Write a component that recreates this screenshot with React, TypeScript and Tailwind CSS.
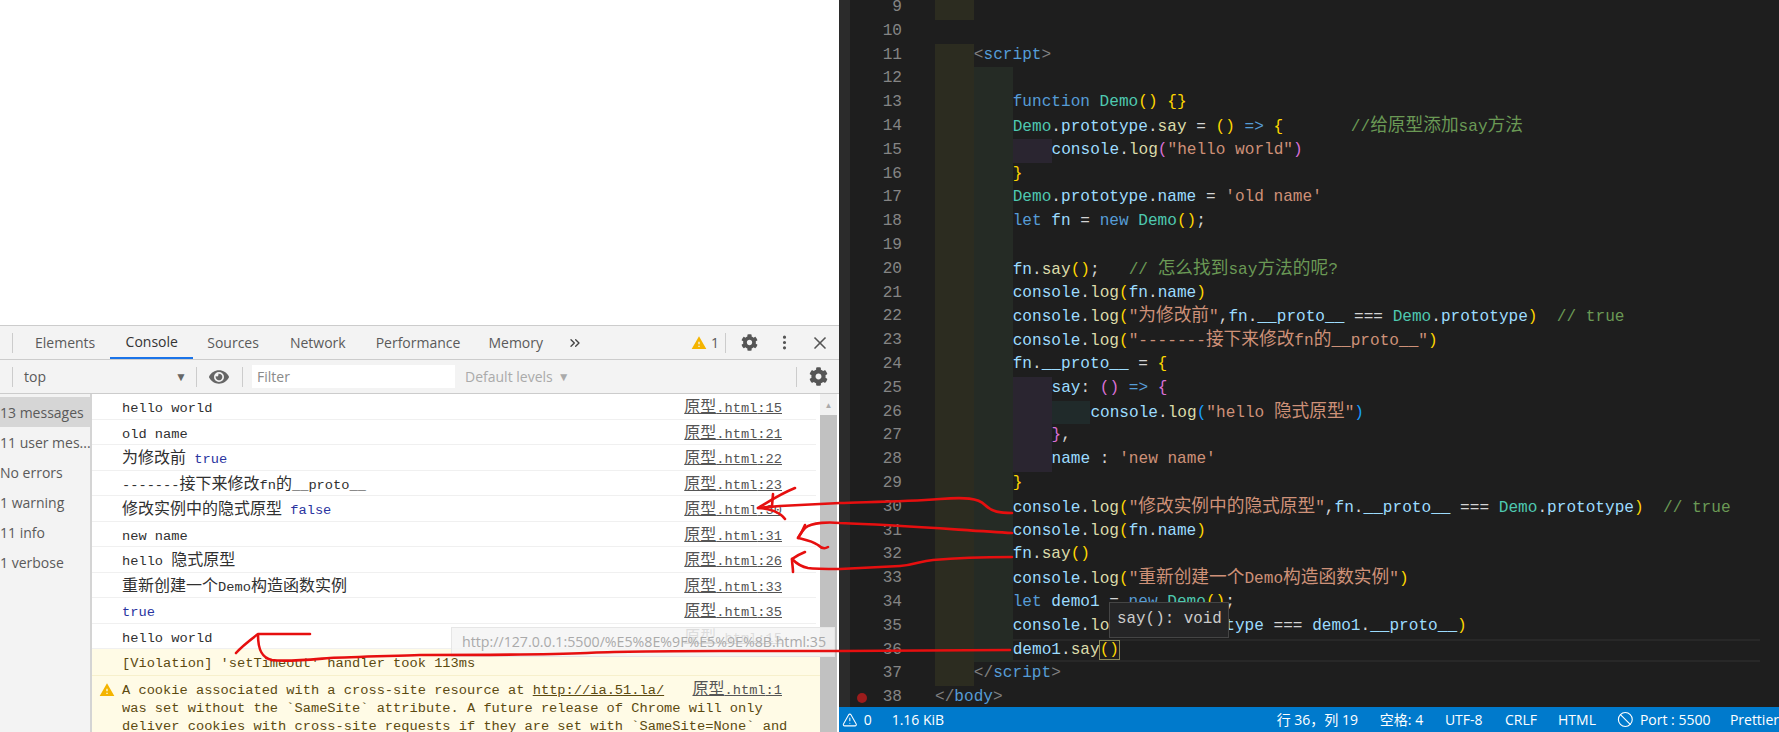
import { Ban, TriangleAlert } from "lucide-react";
import { BsThreeDotsVertical } from "react-icons/bs";
import { FaCog, FaEye } from "react-icons/fa";
import { FiChevronsRight, FiX } from "react-icons/fi";
import { MdWarning } from "react-icons/md";

type Tok = [string, string];

const V = "text-[#9cdcfe]";
const F = "text-[#dcdcaa]";
const S = "text-[#ce9178]";
const C = "text-[#4ec9b0]";
const K = "text-[#569cd6]";
const G = "text-[#6a9955]";
const Y = "text-[#ffd700]";
const P = "text-[#da70d6]";
const B = "text-[#179fff]";
const W = "text-[#d4d4d4]";
const T = "text-[#808080]";

const LOG: Tok[] = [[V, "console"], [W, "."], [F, "log"]];
const PROTO_CMP: Tok[] = [[W, ","], [V, "fn"], [W, "."], [V, "__proto__"], [W, " === "], [C, "Demo"], [W, "."], [V, "prototype"]];

// 行番号 9 から 38 まで
const LINES: { n: number; indent: number; toks: Tok[] }[] = [
  { n: 9, indent: 1, toks: [] },
  { n: 10, indent: 0, toks: [] },
  { n: 11, indent: 1, toks: [[T, "<"], [K, "script"], [T, ">"]] },
  { n: 12, indent: 2, toks: [] },
  { n: 13, indent: 2, toks: [[K, "function "], [C, "Demo"], [Y, "() {}"]] },
  { n: 14, indent: 2, toks: [[C, "Demo"], [W, "."], [V, "prototype"], [W, "."], [F, "say"], [W, " = "], [Y, "()"], [K, " => "], [Y, "{"], [G, "       //给原型添加say方法"]] },
  { n: 15, indent: 3, toks: [...LOG, [P, "("], [S, "\"hello world\""], [P, ")"]] },
  { n: 16, indent: 2, toks: [[Y, "}"]] },
  { n: 17, indent: 2, toks: [[C, "Demo"], [W, "."], [V, "prototype"], [W, "."], [V, "name"], [W, " = "], [S, "'old name'"]] },
  { n: 18, indent: 2, toks: [[K, "let "], [V, "fn"], [W, " = "], [K, "new "], [C, "Demo"], [Y, "()"], [W, ";"]] },
  { n: 19, indent: 2, toks: [] },
  { n: 20, indent: 2, toks: [[V, "fn"], [W, "."], [F, "say"], [Y, "()"], [W, ";"], [G, "   // 怎么找到say方法的呢?"]] },
  { n: 21, indent: 2, toks: [...LOG, [Y, "("], [V, "fn"], [W, "."], [V, "name"], [Y, ")"]] },
  { n: 22, indent: 2, toks: [...LOG, [Y, "("], [S, "\"为修改前\""], ...PROTO_CMP, [Y, ")"], [G, "  // true"]] },
  { n: 23, indent: 2, toks: [...LOG, [Y, "("], [S, "\"-------接下来修改fn的__proto__\""], [Y, ")"]] },
  { n: 24, indent: 2, toks: [[V, "fn"], [W, "."], [V, "__proto__"], [W, " = "], [Y, "{"]] },
  { n: 25, indent: 3, toks: [[V, "say"], [W, ": "], [P, "()"], [K, " => "], [P, "{"]] },
  { n: 26, indent: 4, toks: [...LOG, [B, "("], [S, "\"hello 隐式原型\""], [B, ")"]] },
  { n: 27, indent: 3, toks: [[P, "}"], [W, ","]] },
  { n: 28, indent: 3, toks: [[V, "name"], [W, " : "], [S, "'new name'"]] },
  { n: 29, indent: 2, toks: [[Y, "}"]] },
  { n: 30, indent: 2, toks: [...LOG, [Y, "("], [S, "\"修改实例中的隐式原型\""], ...PROTO_CMP, [Y, ")"], [G, "  // true"]] },
  { n: 31, indent: 2, toks: [...LOG, [Y, "("], [V, "fn"], [W, "."], [V, "name"], [Y, ")"]] },
  { n: 32, indent: 2, toks: [[V, "fn"], [W, "."], [F, "say"], [Y, "()"]] },
  { n: 33, indent: 2, toks: [...LOG, [Y, "("], [S, "\"重新创建一个Demo构造函数实例\""], [Y, ")"]] },
  { n: 34, indent: 2, toks: [[K, "let "], [V, "demo1"], [W, " = "], [K, "new "], [C, "Demo"], [Y, "()"], [W, ";"]] },
  { n: 35, indent: 2, toks: [...LOG, [Y, "("], [C, "Demo"], [W, "."], [V, "prototype"], [W, " === "], [V, "demo1"], [W, "."], [V, "__proto__"], [Y, ")"]] },
  { n: 36, indent: 2, toks: [[V, "demo1"], [W, "."], [F, "say"]] },
  { n: 37, indent: 1, toks: [[T, "</"], [K, "script"], [T, ">"]] },
  { n: 38, indent: 0, toks: [[T, "</"], [K, "body"], [T, ">"]] },
];

const INDENT_COLORS = ["bg-[#2c2c20]", "bg-[#252b25]", "bg-[#2a2530]", "bg-[#202a2a]"];

// 漢字だけ少し大きくする
function Mixed({ text, cjk }: { text: string; cjk: string }) {
  return (
    <>
      {text.split(/([\u4e00-\u9fff]+)/).map((part, i) =>
        /[\u4e00-\u9fff]/.test(part) ? (
          <span key={i} className={cjk}>{part}</span>
        ) : (
          <span key={i}>{part}</span>
        )
      )}
    </>
  );
}

function Editor() {
  return (
    <div className="flex flex-1 flex-col overflow-hidden bg-[#1e1e1e] min-w-0">
      <div className="flex flex-1 overflow-hidden min-h-0">
        <div className="w-[11px] shrink-0 bg-[#2b2b2b]" />
        <div className="flex-1 min-w-0 -mt-[4px] font-['Liberation_Mono','Noto_Sans_CJK_SC',monospace] text-[16.1px] leading-[23.8px] whitespace-pre">
          {LINES.map((line) => (
            <div key={line.n} className="flex h-[23.8px]">
              <div className="flex w-[85px] shrink-0 items-center">
                <div className="flex w-[24px] justify-center">
                  {line.n === 38 && <span className="h-[10px] w-[10px] rounded-full bg-[#9c1c1c]" />}
                </div>
                <div className="flex-1 pr-[33px] text-right text-[#858585]">{line.n}</div>
              </div>
              <div className={`flex flex-1 mr-[19px] ${line.n === 36 ? "shadow-[inset_0_2px_0_#282828,inset_0_-2px_0_#282828]" : ""}`}>
                {INDENT_COLORS.slice(0, line.indent).map((color) => (
                  <span key={color} className={`w-[38.85px] shrink-0 ${color}`} />
                ))}
                <span>
                  {line.toks.map((tok, i) => (
                    <span key={i} className={tok[0]}>
                      <Mixed text={tok[1]} cjk="text-[17.7px]" />
                    </span>
                  ))}
                  {line.n === 36 && (
                    <span className="text-[#ffd700] outline outline-1 outline-[#8a8a5c]">()</span>
                  )}
                </span>
              </div>
            </div>
          ))}
        </div>
      </div>
      <div className="flex h-[25px] shrink-0 items-center bg-[#007acc] text-[14px] text-white font-['Open_Sans','Noto_Sans_CJK_SC',sans-serif] whitespace-nowrap">
        <TriangleAlert size={16} strokeWidth={1.6} className="ml-[3px]" />
        <span className="ml-[6px]">0</span>
        <span className="ml-[20px] w-[52px]">1.16 KiB</span>
        <span className="ml-[333px] w-[86px]">行 36，列 19</span>
        <span className="ml-[19px] w-[46px]">空格: 4</span>
        <span className="ml-[20px] w-[40px]">UTF-8</span>
        <span className="ml-[21px] w-[32px]">CRLF</span>
        <span className="ml-[21px] w-[39px]">HTML</span>
        <Ban size={17} strokeWidth={1.6} className="ml-[21px]" />
        <span className="ml-[6px] w-[70px]">Port : 5500</span>
        <span className="ml-[20px]">Prettier</span>
      </div>
    </div>
  );
}

const FILTERS = ["13 messages", "11 user mes...", "No errors", "1 warning", "11 info", "1 verbose"];

const TRUE_BLUE = "text-[#2a34a0]";

const ROWS: { text: string; value?: string; link: string }[] = [
  { text: "hello world", link: ":15" },
  { text: "old name", link: ":21" },
  { text: "为修改前 ", value: "true", link: ":22" },
  { text: "-------接下来修改fn的__proto__", link: ":23" },
  { text: "修改实例中的隐式原型 ", value: "false", link: ":30" },
  { text: "new name", link: ":31" },
  { text: "hello 隐式原型", link: ":26" },
  { text: "重新创建一个Demo构造函数实例", link: ":33" },
  { text: "", value: "true", link: ":35" },
  { text: "hello world", link: ":15" },
];

function SourceLink({ line }: { line: string }) {
  return (
    <span className="text-[#555] underline">
      <span className="text-[16px]">原型</span>.html{line}
    </span>
  );
}

function DevTools() {
  return (
    <div className="flex flex-1 flex-col min-h-0 bg-white text-[#5a5a5a] font-['Open_Sans',sans-serif] text-[14px]">
      <div className="flex h-[35px] shrink-0 items-center border-y border-[#cccccc] bg-[#f3f3f3]">
        <span className="ml-[12px] h-[20px] w-px bg-[#ccc]" />
        <span className="ml-[22px]">Elements</span>
        <span className="ml-[15px] flex h-full w-[83px] items-center justify-center border-b-2 border-[#1a73e8] text-[#333]">Console</span>
        <span className="ml-[14px]">Sources</span>
        <span className="ml-[31px]">Network</span>
        <span className="ml-[30px]">Performance</span>
        <span className="ml-[28px]">Memory</span>
        <FiChevronsRight size={16} className="ml-[24px] text-[#444]" />
        <MdWarning size={16} className="ml-[108px] text-[#f4b400]" />
        <span className="ml-[4px]">1</span>
        <span className="ml-[6px] h-[20px] w-px bg-[#ccc]" />
        <FaCog size={17} className="ml-[15px] text-[#555]" />
        <BsThreeDotsVertical size={17} className="ml-[18px] text-[#555]" />
        <FiX size={20} className="ml-[17px] text-[#555]" />
      </div>
      <div className="flex h-[34px] shrink-0 items-center border-b border-[#cccccc] bg-[#f3f3f3]">
        <span className="ml-[12px] h-[20px] w-px bg-[#ccc]" />
        <span className="ml-[11px] w-[151px]">top</span>
        <span className="w-[12px] text-[12px] text-[#666]">▼</span>
        <span className="ml-[9px] h-[20px] w-px bg-[#ccc]" />
        <FaEye size={20} className="ml-[12px] text-[#666]" />
        <span className="ml-[13px] h-[20px] w-px bg-[#ccc]" />
        <div className="ml-[9px] flex h-[23px] w-[203px] items-center bg-white pl-[5px] text-[#8a8a8a]">Filter</div>
        <span className="ml-[10px] text-[#aaa]">Default levels</span>
        <span className="ml-[5px] text-[12px] text-[#aaa]">▼</span>
        <span className="ml-auto h-[20px] w-px bg-[#ccc]" />
        <FaCog size={19} className="ml-[12px] mr-[11px] text-[#555]" />
      </div>
      <div className="flex flex-1 min-h-0">
        <div className="w-[92px] shrink-0 border-r-2 border-[#d4d4d4] bg-[#f3f3f3] pt-[3px] whitespace-nowrap">
          {FILTERS.map((f, i) => (
            <div key={f} className={`flex h-[30px] items-center overflow-hidden ${i === 0 ? "bg-[#d6d6d6]" : ""}`}>
              {f}
            </div>
          ))}
        </div>
        <div className="flex flex-1 flex-col min-w-0 font-['Liberation_Mono','Noto_Sans_CJK_SC',monospace] text-[13.7px] text-[#303030] whitespace-pre">
          {ROWS.map((r, i) => (
            <div key={i} className="mr-[4px] flex h-[25.5px] shrink-0 items-baseline justify-between border-b border-[#f0f0f0] pl-[30px] pr-[34px] pt-[2px] leading-[24px]">
              <span>
                <Mixed text={r.text} cjk="text-[16px]" />
                {r.value && <span className={TRUE_BLUE}>{r.value}</span>}
              </span>
              <SourceLink line={r.link} />
            </div>
          ))}
          <div className="flex-1 bg-[#fffbe6] text-[#5c4a10]">
            <div className="flex h-[27px] items-center border-b border-[#f7f0cc] pl-[30px] pt-[4px]">[Violation] 'setTimeout' handler took 113ms</div>
            <div className="flex pt-[5px] leading-[18px]">
              <div className="flex w-[30px] shrink-0 justify-center pt-[1px]">
                <MdWarning size={16} className="text-[#f4b400]" />
              </div>
              <div className="flex-1 min-w-0">
                <div className="flex items-baseline justify-between pr-[38px]">
                  <span>A cookie associated with a cross-site resource at <span className="underline">http://ia.51.la/</span></span>
                  <SourceLink line=":1" />
                </div>
                <div>was set without the `SameSite` attribute. A future release of Chrome will only</div>
                <div>deliver cookies with cross-site requests if they are set with `SameSite=None` and</div>
              </div>
            </div>
          </div>
        </div>
        <div className="flex w-[19px] shrink-0 flex-col bg-white pr-[2px]">
          <div className="flex h-[21px] items-center justify-center bg-[#f1f1f1] text-[8px] text-[#aaa]">▲</div>
          <div className="flex-1 bg-[#c1c1c1]" />
        </div>
      </div>
    </div>
  );
}

export default function App() {
  return (
    <div className="relative flex h-[732px] w-[1779px] overflow-hidden">
      <div className="flex w-[839px] shrink-0 flex-col bg-white">
        <div className="h-[325px] shrink-0" />
        <DevTools />
      </div>
      <Editor />

      {/* リンクのURLツールチップ */}
      <div className="absolute left-[451px] top-[627px] flex h-[30px] w-[384px] items-center border border-[#e6e6e6] bg-[#f4f4f4]/85 pl-[10px] font-['Open_Sans',sans-serif] text-[14.2px] text-[#aaaaaa] whitespace-nowrap">
        http://127.0.0.1:5500/%E5%8E%9F%E5%9E%8B.html:35
      </div>
      {/* hover */}
      <div className="absolute left-[1109px] top-[602px] flex h-[36px] w-[120px] items-center border border-[#454545] bg-[#252526] pl-[7px] font-['Liberation_Mono',monospace] text-[15.9px] text-[#cccccc] whitespace-pre">
        say(): void
      </div>

      {/* 手書きの赤い矢印 */}
      <svg className="pointer-events-none absolute inset-0 h-full w-full" viewBox="0 0 1779 732" fill="none" stroke="#e60f0f" strokeWidth="2.6" strokeLinecap="round" strokeLinejoin="round">
        <path d="M1012 513 C1000 513 992 512 985 505 C978 498 965 497 940 499 C900 502 860 502 840 503 L780 506 L758 508" />
        <path d="M795 488 C780 494 768 502 758 508 C768 508 780 512 785 519" />
        <path d="M773 494 L772 506" />
        <path d="M1012 533 C960 530 900 525 840 523 C830 522 812 522 805 528 C802 531 800 535 798 538" />
        <path d="M805 525 C803 530 800 535 798 538 C806 540 812 541 818 545 C822 549 825 549 828 547" />
        <path d="M1012 557 C985 557 955 558 933 560 C920 561 915 565 900 566 L840 569 C825 569 815 569 808 568 C802 567 797 564 792 559" />
        <path d="M805 552 C800 554 796 556 792 559 C792 563 793 568 793 572" />
        <path d="M1010 650 L840 651 L720 651 C680 651 620 651 587 653 C540 655 480 655 420 655 C390 656 350 657 330 658 C305 660 285 662 272 660 C262 658 258 650 258 635" />
        <path d="M236 653 C242 646 250 640 258 634 C275 634 295 634 310 634" />
      </svg>
    </div>
  );
}
